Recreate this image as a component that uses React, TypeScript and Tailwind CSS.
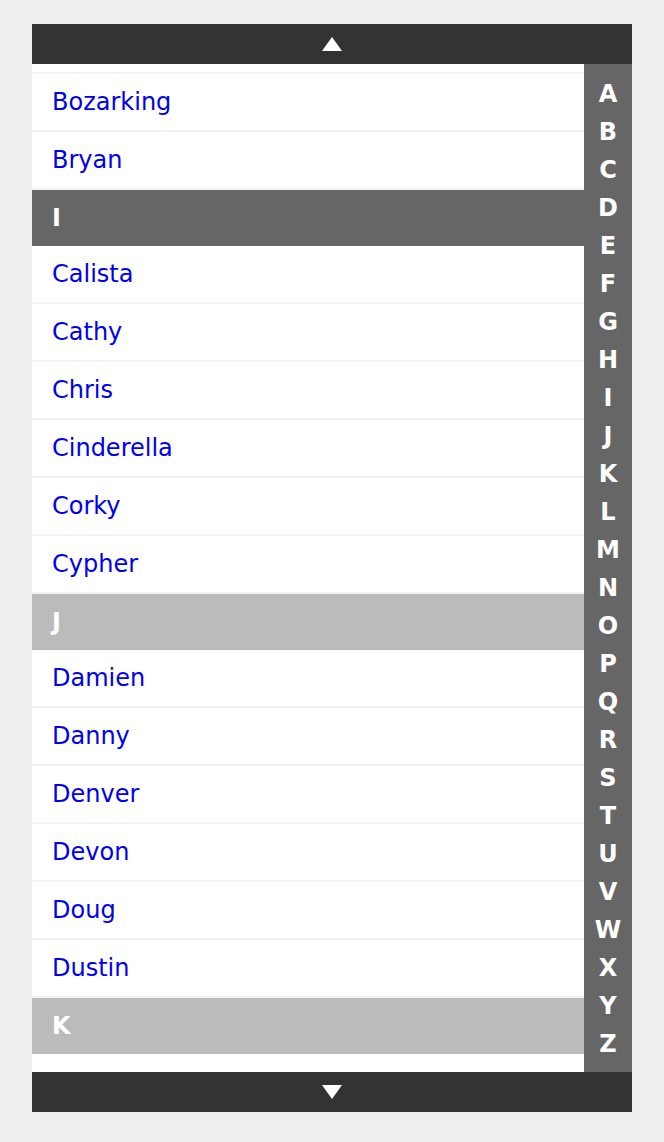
type Item = { type: 'header'; label: string; active?: boolean } | { type: 'row'; label: string };

const items: Item[] = [
  { type: 'row', label: 'Bozarking' },
  { type: 'row', label: 'Bryan' },
  { type: 'header', label: 'I', active: true },
  { type: 'row', label: 'Calista' },
  { type: 'row', label: 'Cathy' },
  { type: 'row', label: 'Chris' },
  { type: 'row', label: 'Cinderella' },
  { type: 'row', label: 'Corky' },
  { type: 'row', label: 'Cypher' },
  { type: 'header', label: 'J' },
  { type: 'row', label: 'Damien' },
  { type: 'row', label: 'Danny' },
  { type: 'row', label: 'Denver' },
  { type: 'row', label: 'Devon' },
  { type: 'row', label: 'Doug' },
  { type: 'row', label: 'Dustin' },
  { type: 'header', label: 'K' },
];

const letters = 'ABCDEFGHIJKLMNOPQRSTUVWXYZ'.split('');

function Arrow({ down }: { down?: boolean }) {
  return (
    <svg width="20" height="14" viewBox="0 0 20 14" className="block">
      <path d={down ? 'M0 0H20L10 14Z' : 'M10 0L20 14H0Z'} fill="#fff" />
    </svg>
  );
}

function App() {
  return (
    <div className="min-h-screen bg-[#eeeeee] px-8 pt-6 font-['DejaVu_Sans',Verdana,sans-serif]">
      <div className="w-[600px]">
        <div className="flex h-10 items-center justify-center bg-[#333333]">
          <Arrow />
        </div>

        <div className="flex h-[1008px]">
          <div className="flex-1 overflow-hidden bg-white">
            {/* tail of the row scrolled out of view */}
            <div className="h-[10px] border-b-2 border-[#f2f2f2]" />
            {items.map((item, i) =>
              item.type === 'header' ? (
                <div
                  key={i}
                  className={`flex h-14 items-center px-5 text-[24px] font-bold text-white ${
                    item.active ? 'bg-[#666666]' : 'bg-[#bbbbbb]'
                  }`}
                >
                  {item.label}
                </div>
              ) : (
                <div
                  key={i}
                  className="flex h-[58px] items-center border-b-2 border-[#f2f2f2] px-5 text-[24px] text-[#0000ee]"
                >
                  {item.label}
                </div>
              ),
            )}
          </div>

          <div className="flex w-12 flex-col bg-[#666666] py-[10px]">
            {letters.map((l) => (
              <div
                key={l}
                className="flex h-[38px] items-center justify-center pt-px text-[24px] font-bold leading-none text-white"
              >
                {l}
              </div>
            ))}
          </div>
        </div>

        <div className="flex h-10 items-center justify-center bg-[#333333]">
          <Arrow down />
        </div>
      </div>
    </div>
  );
}

export default App;
